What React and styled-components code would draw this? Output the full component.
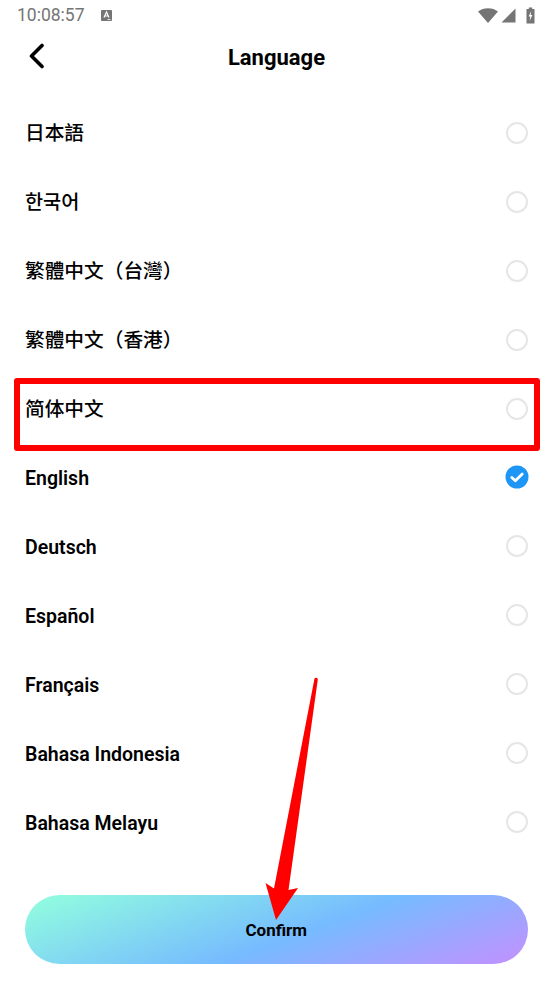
import React from "react";
import styled, { createGlobalStyle } from "styled-components";

const languages = [
  { name: "日本語", cjk: true },
  { name: "한국어", cjk: true },
  { name: "繁體中文（台灣）", cjk: true },
  { name: "繁體中文（香港）", cjk: true },
  { name: "简体中文", cjk: true },
  { name: "English" },
  { name: "Deutsch" },
  { name: "Español" },
  { name: "Français" },
  { name: "Bahasa Indonesia" },
  { name: "Bahasa Melayu" },
];

export default function App() {
  return (
    <Page>
      <GlobalStyle />
      <StatusBar>
        <StatusLeft>
          <Time>10:08:57</Time>
          <svg width="13" height="13" viewBox="0 0 13 13">
            <rect x="1" y="1" width="11" height="11" rx="1" fill="#757575" />
            <path d="M4 8.5 6.5 3 9 8.5M5 7h3" fill="none" stroke="#fff" strokeWidth="1.2" />
            <path d="M7.5 10.5h3" stroke="#fff" strokeWidth="0.8" />
          </svg>
        </StatusLeft>
        <StatusRight>
          <svg width="20" height="15" viewBox="0 0 20 15">
            <path d="M0 3.6C2.7 1.4 6.2 0.2 10 0.2s7.3 1.2 10 3.4L10 15z" fill="#757575" />
          </svg>
          <svg width="15" height="15" viewBox="0 0 15 15">
            <path d="M14.5 0.5V14.5H0.5z" fill="#757575" />
          </svg>
          <Battery width="9" height="17" viewBox="0 0 9 17">
            <path d="M2.8 0.5h3.4V2H8.5V16.5H0.5V2H2.8z" fill="#757575" />
            <path d="M5.2 4 2.6 9.5h1.7L3.6 14 6.4 8H4.6z" fill="#fff" />
          </Battery>
        </StatusRight>
      </StatusBar>

      <Header>
        <BackButton aria-label="Back">
          <svg width="18" height="26" viewBox="0 0 18 26">
            <path
              d="M15 2.5 4.5 13 15 23.5"
              fill="none"
              stroke="#000"
              strokeWidth="3.6"
              strokeLinecap="round"
              strokeLinejoin="round"
            />
          </svg>
        </BackButton>
        <Title>Language</Title>
      </Header>

      <List>
        {languages.map(({ name, cjk }) => (
          <Row key={name}>
            <Label $cjk={cjk}>{name}</Label>
            {name === "English" ? (
              <svg width="24" height="24" viewBox="0 0 24 24">
                <circle cx="12" cy="12" r="11.5" fill="#1e96f5" />
                <path
                  d="M6.8 12.4 10.4 15.8 17.2 9"
                  fill="none"
                  stroke="#fff"
                  strokeWidth="2.8"
                  strokeLinecap="round"
                  strokeLinejoin="round"
                />
              </svg>
            ) : (
              <Radio />
            )}
            {name === "简体中文" && <Highlight />}
          </Row>
        ))}
      </List>

      <Footer>
        <ConfirmButton>Confirm</ConfirmButton>
      </Footer>

      <Arrow width="70" height="260" viewBox="0 0 70 260">
        <path
          d="M54.5 8.5C55.5 7 58 7.5 57.8 9.6L28.5 220 38 218 16 250 5.5 213 14 218.5z"
          fill="#ff0000"
        />
      </Arrow>
    </Page>
  );
}

const GlobalStyle = createGlobalStyle`
  html, body {
    margin: 0;
    padding: 0;
    background: #fff;
  }
  * {
    box-sizing: border-box;
  }
`;

const Page = styled.div`
  position: relative;
  width: 553px;
  height: 984px;
  overflow: hidden;
  background: #fff;
  font-family: Roboto, "Noto Sans CJK SC", sans-serif;
  color: #000;
`;

const StatusBar = styled.div`
  display: flex;
  align-items: center;
  justify-content: space-between;
  height: 30px;
  padding: 0 18px 0 17px;
`;

const StatusLeft = styled.div`
  display: flex;
  align-items: center;
  gap: 15px;
`;

const Time = styled.span`
  font-size: 17.5px;
  color: #757575;
`;

const StatusRight = styled.div`
  display: flex;
  align-items: center;
  gap: 3px;
`;

const Battery = styled.svg`
  margin-left: 7px;
`;

const Header = styled.header`
  position: relative;
  display: flex;
  align-items: center;
  justify-content: center;
  height: 54px;
`;

const BackButton = styled.button`
  position: absolute;
  left: 27px;
  top: 13px;
  display: flex;
  padding: 0;
  border: none;
  background: none;
`;

const Title = styled.h1`
  margin: 0;
  font-size: 22px;
  font-weight: 700;
`;

const List = styled.div`
  display: flex;
  flex-direction: column;
  padding-top: 14.5px;
`;

const Row = styled.div`
  position: relative;
  display: flex;
  align-items: center;
  justify-content: space-between;
  height: 68.9px;
  padding: 0 24px 0 25px;
`;

const Label = styled.span`
  font-size: ${(p) => (p.$cjk ? "19.7px" : "19.5px")};
  font-weight: ${(p) => (p.$cjk ? 500 : 600)};
  line-height: 26px;
  padding-top: ${(p) => (p.$cjk ? "3px" : "4px")};
`;

const Radio = styled.span`
  width: 22px;
  height: 22px;
  margin-right: 1px;
  border: 2px solid #e6e6e6;
  border-radius: 50%;
`;

const Highlight = styled.div`
  position: absolute;
  left: 14px;
  right: 13px;
  top: 3.5px;
  height: 73px;
  border: 6px solid #ff0000;
  border-radius: 3px;
  pointer-events: none;
`;

const Footer = styled.div`
  padding: 38.5px 25px 0 24.5px;
`;

const ConfirmButton = styled.button`
  display: block;
  width: 100%;
  height: 69px;
  padding: 2px 0 0;
  border: none;
  border-radius: 35px;
  background: linear-gradient(160deg, #90fbe0 4%, #76bbff 55%, #bd94ff 96%);
  font-family: inherit;
  font-size: 17px;
  font-weight: 700;
  color: #000;
`;

const Arrow = styled.svg`
  position: absolute;
  left: 260px;
  top: 670px;
`;
